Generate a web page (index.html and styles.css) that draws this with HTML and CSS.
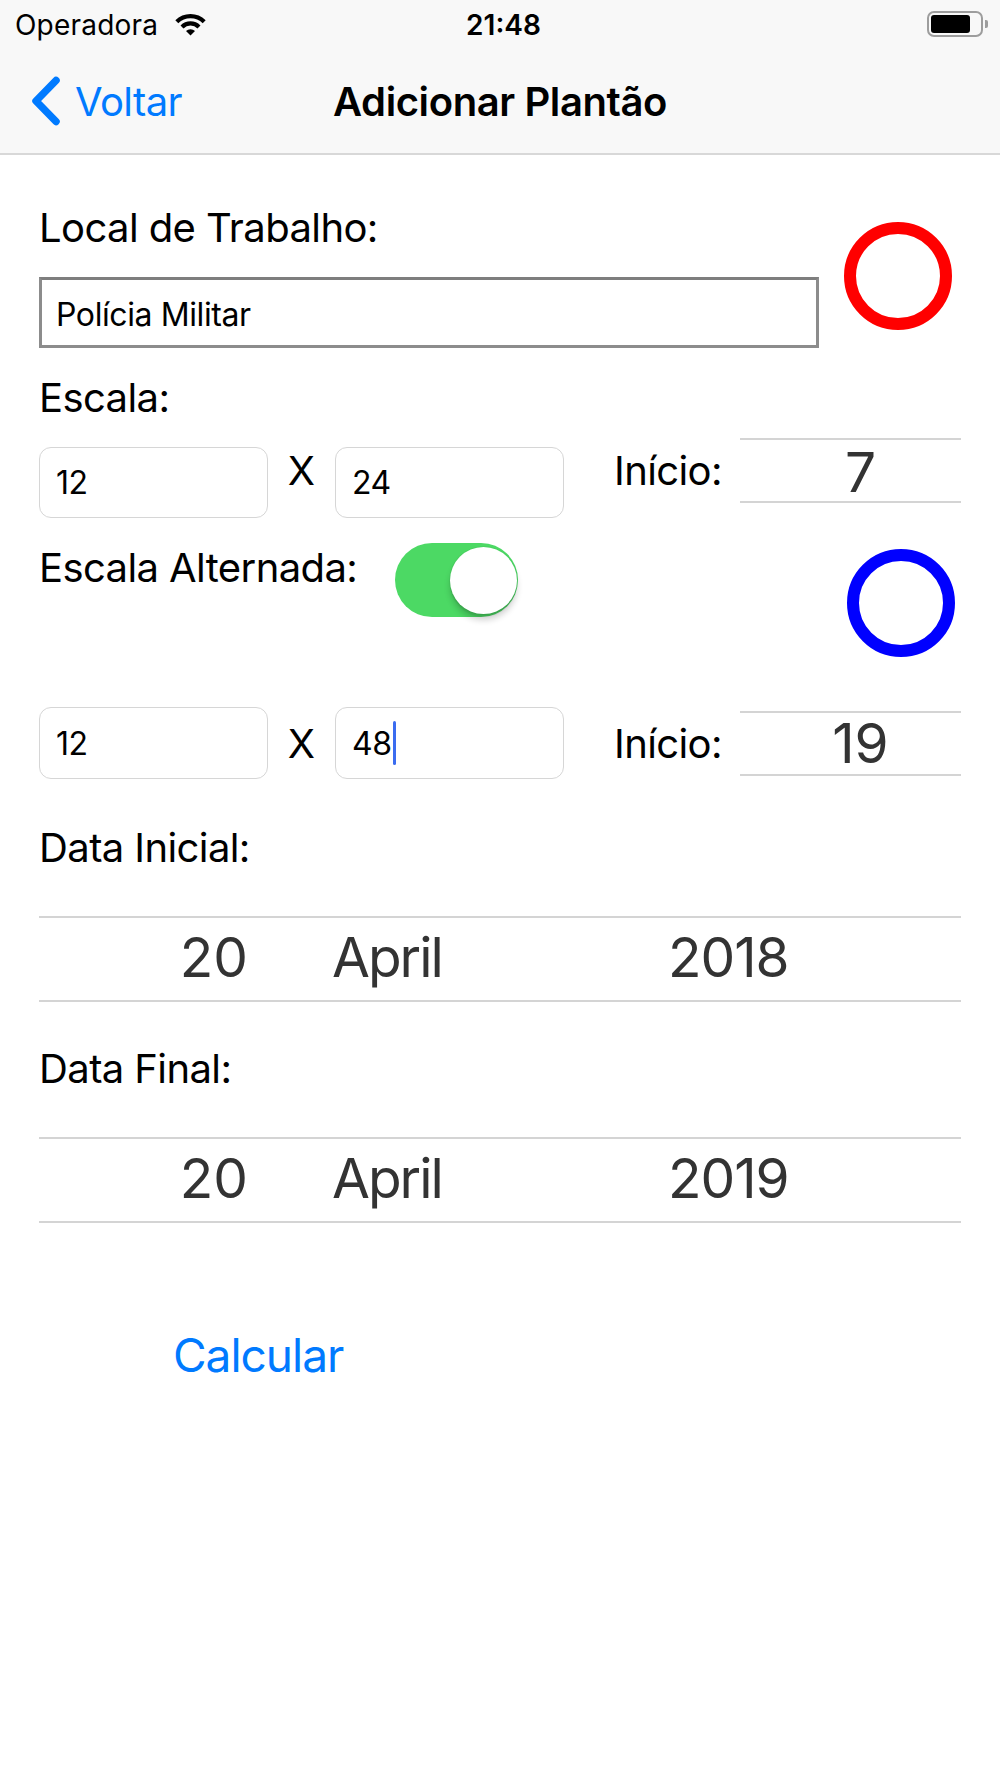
FILE: index.html
```html
<!DOCTYPE html>
<html lang="pt">
<head>
<meta charset="utf-8">
<title>Adicionar Plantão</title>
<link rel="stylesheet" href="styles.css">
</head>
<body>
<div class="screen">
  <header class="status">
    <div class="status-left">
      <span class="carrier">Operadora</span>
      <svg class="wifi" width="33" height="23" viewBox="0 0 33 23">
        <path d="M2.8 8.7 A19.5 19.5 0 0 1 30.2 8.7" fill="none" stroke="#000" stroke-width="4.2"/>
        <path d="M8 14 A12 12 0 0 1 25 14" fill="none" stroke="#000" stroke-width="4.2"/>
        <path d="M16.5 22.5 L12 18 A6.4 6.4 0 0 1 21 18 Z" fill="#000"/>
      </svg>
    </div>
    <div class="time">21:48</div>
    <div class="status-right">
      <div class="battery"><span class="battery-fill"></span></div>
      <span class="battery-tip"></span>
    </div>
  </header>

  <nav class="navbar">
    <div class="nav-back">
      <svg class="chevron" width="30" height="50" viewBox="0 0 30 50">
        <polyline points="25,4.5 5,25 25,45.5" fill="none" stroke="#007aff" stroke-width="7.5" stroke-linecap="round" stroke-linejoin="round"/>
      </svg>
      <span>Voltar</span>
    </div>
    <div class="nav-title">Adicionar Plantão</div>
    <div></div>
  </nav>

  <main class="form">
    <section class="row-local">
      <div class="local-col">
        <div class="label">Local de Trabalho:</div>
        <div class="bezel-field">Polícia Militar</div>
      </div>
      <div class="ring ring-red"></div>
    </section>

    <div class="label label-escala">Escala:</div>

    <div class="scale-row scale-row-1">
      <div class="field">12</div>
      <div class="times">X</div>
      <div class="field">24</div>
      <div class="inicio">Início:</div>
      <div class="mini-picker">7</div>
    </div>

    <section class="alt-row">
      <div class="label alt-label">Escala Alternada:</div>
      <div class="switch"><span class="knob"></span></div>
      <div class="ring ring-blue"></div>
    </section>

    <div class="scale-row scale-row-2">
      <div class="field">12</div>
      <div class="times">X</div>
      <div class="field">48<span class="caret"></span></div>
      <div class="inicio">Início:</div>
      <div class="mini-picker">19</div>
    </div>

    <div class="label label-data">Data Inicial:</div>
    <div class="date-picker">
      <span class="dp-day">20</span>
      <span class="dp-month">April</span>
      <span class="dp-year">2018</span>
    </div>

    <div class="label label-final">Data Final:</div>
    <div class="date-picker">
      <span class="dp-day">20</span>
      <span class="dp-month">April</span>
      <span class="dp-year">2019</span>
    </div>

    <button class="calc">Calcular</button>
  </main>
</div>
</body>
</html>
```

FILE: styles.css
```css
* { box-sizing: border-box; }

html, body {
  margin: 0;
  padding: 0;
  background: #ffffff;
}

body {
  font-family: "Inter", "Roboto", "Liberation Sans", sans-serif;
  color: #000;
}

.screen {
  width: 1000px;
  min-height: 1778px;
  background: #fff;
}

/* status bar */
.status {
  height: 48px;
  background: #f8f8f8;
  display: grid;
  grid-template-columns: 1fr auto 1fr;
  align-items: center;
  padding: 2px 12px 0 15px;
}
.status-left {
  display: flex;
  align-items: center;
}
.carrier {
  font-size: 28px;
  letter-spacing: 0.2px;
}
.wifi {
  margin-left: 16px;
  margin-top: -2px;
}
.time {
  font-size: 28px;
  font-weight: 600;
  letter-spacing: 0;
  padding-left: 4px;
}
.status-right {
  display: flex;
  justify-content: flex-end;
  align-items: center;
}
.battery {
  width: 56px;
  height: 26px;
  border: 2.5px solid #9d9d9d;
  border-radius: 7px;
  padding: 2px;
  margin-top: -2px;
}
.battery-fill {
  display: block;
  width: 39px;
  height: 100%;
  background: #000;
  border-radius: 3px;
}
.battery-tip {
  width: 3px;
  height: 8px;
  background: #9d9d9d;
  border-radius: 0 2px 2px 0;
  margin-left: 2px;
  margin-top: -2px;
}

/* nav */
.navbar {
  height: 107px;
  background: #f8f8f8;
  border-bottom: 2px solid #d8d8d8;
  display: grid;
  grid-template-columns: 1fr auto 1fr;
  align-items: center;
  padding-top: 2px;
}
.nav-back {
  display: flex;
  align-items: center;
  color: #007aff;
  font-size: 40px;
  letter-spacing: -0.6px;
  padding-left: 31px;
}
.chevron {
  margin-right: 14px;
  margin-top: -2px;
}
.nav-title {
  font-size: 40px;
  font-weight: 600;
  letter-spacing: -0.4px;
}

/* form */
.form {
  padding: 0 39px 0 39px;
}
.label {
  font-size: 40px;
  line-height: 49px;
  letter-spacing: -0.6px;
  white-space: nowrap;
}

.row-local {
  display: flex;
  align-items: flex-start;
  margin-top: 48px;
}
.local-col {
  width: 780px;
}
.bezel-field {
  margin-top: 25px;
  height: 71px;
  border: 3px solid #8c8c8c;
  border-top-color: #7e7e7e;
  display: flex;
  align-items: center;
  padding-left: 14px;
  font-size: 32px;
  letter-spacing: -0.4px;
  padding-top: 3px;
}
.ring {
  width: 108px;
  height: 108px;
  border-radius: 50%;
  border: 12px solid;
  flex: none;
}
.ring-red {
  border-color: #ff0000;
  margin-left: 25px;
  margin-top: 19px;
}

.label-escala {
  margin-top: 25px;
}

.scale-row {
  display: flex;
  align-items: flex-start;
}
.scale-row-1 { margin-top: 16px; }
.scale-row-2 { margin-top: 50px; }

.field {
  width: 229px;
  height: 71px;
  border: 1px solid #d6d6d6;
  border-radius: 12px;
  display: flex;
  align-items: center;
  padding-left: 16px;
  font-size: 32px;
  letter-spacing: -0.4px;
  flex: none;
}
.scale-row-1 .field { margin-top: 9px; }
.scale-row-2 .field { height: 72px; }

.times {
  width: 67px;
  text-align: center;
  font-size: 40px;
  line-height: 49px;
  margin-top: 8px;
  flex: none;
}
.inicio {
  margin-left: 50px;
  font-size: 40px;
  line-height: 49px;
  letter-spacing: -0.6px;
  margin-top: 8px;
}
.scale-row-2 .times,
.scale-row-2 .inicio {
  margin-top: 12px;
}
.mini-picker {
  margin-left: auto;
  width: 221px;
  height: 65px;
  border-top: 2px solid #d4d4d4;
  border-bottom: 2px solid #d4d4d4;
  display: flex;
  align-items: center;
  justify-content: center;
  padding-left: 20px;
  font-size: 55px;
  line-height: 55px;
  color: #333;
  flex: none;
}
.scale-row-1 .mini-picker { padding-top: 3px; }
.scale-row-2 .mini-picker { margin-top: 4px; }

.caret {
  display: inline-block;
  width: 3px;
  height: 44px;
  background: #3b6cf0;
  border-radius: 2px;
  margin-left: 1px;
  vertical-align: middle;
}

.alt-row {
  display: flex;
  align-items: flex-start;
  margin-top: 25px;
}
.alt-label {
  width: 356px;
  flex: none;
}
.switch {
  width: 123px;
  height: 74px;
  border-radius: 37px;
  background: #4cd964;
  position: relative;
  flex: none;
}
.knob {
  position: absolute;
  top: 3.5px;
  right: 1px;
  width: 67px;
  height: 67px;
  border-radius: 50%;
  background: #fff;
  box-shadow: 0 6px 6px rgba(0, 0, 0, 0.18), 0 3px 1px rgba(0, 0, 0, 0.06), 0 0 0 1px rgba(0, 0, 0, 0.04);
}
.ring-blue {
  border-color: #0000ff;
  margin-left: auto;
  margin-right: 6px;
  margin-top: 6px;
}

.label-data { margin-top: 44px; }
.label-final { margin-top: 42px; }

.date-picker {
  margin-top: 44px;
  height: 86px;
  border-top: 2px solid #d4d4d4;
  border-bottom: 2px solid #d4d4d4;
  display: flex;
  align-items: center;
  padding-bottom: 4px;
  font-size: 55px;
  line-height: 55px;
  color: #333;
}
.dp-day {
  width: 209px;
  text-align: right;
  flex: none;
}
.dp-month {
  margin-left: 84px;
  width: 336px;
  flex: none;
  letter-spacing: -2px;
}
.dp-year {
  flex: none;
  letter-spacing: -1px;
}

.calc {
  display: block;
  margin: 104px 0 0 134px;
  padding: 0;
  border: none;
  background: none;
  font-family: inherit;
  font-size: 46px;
  line-height: 56px;
  letter-spacing: -1px;
  color: #007aff;
}
```
